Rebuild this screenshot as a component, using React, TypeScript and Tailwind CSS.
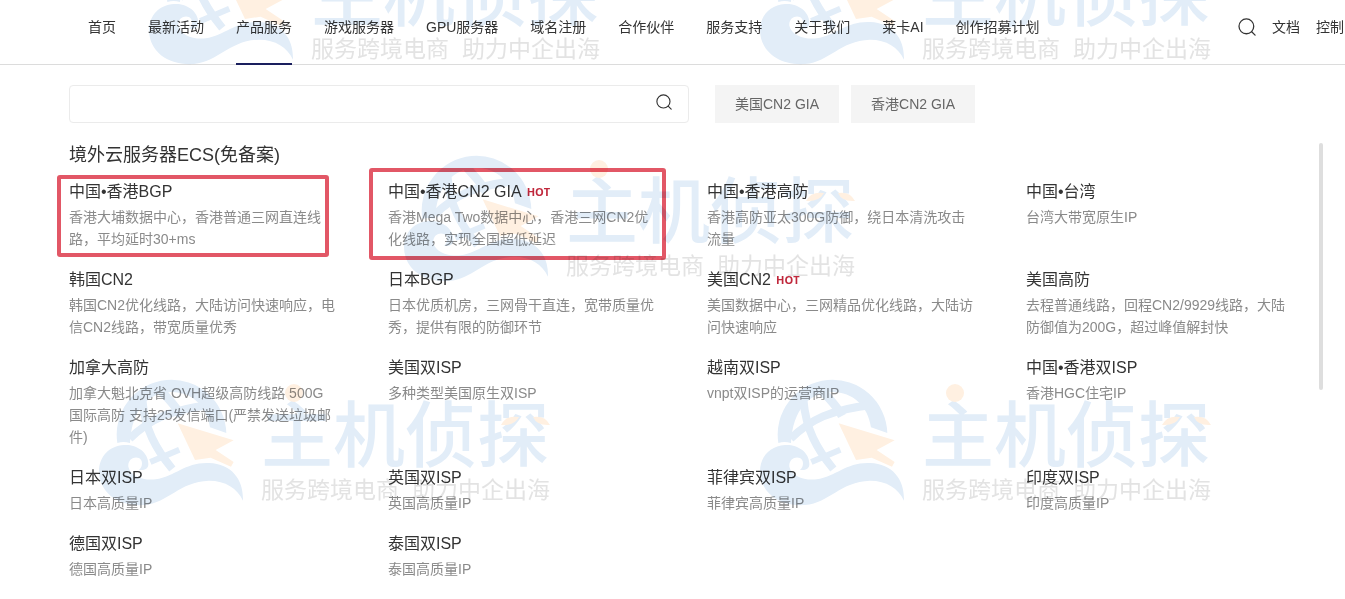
import { useState } from 'react'

const navItems = [
  '首页',
  '最新活动',
  '产品服务',
  '游戏服务器',
  'GPU服务器',
  '域名注册',
  '合作伙伴',
  '服务支持',
  '关于我们',
  '莱卡AI',
  '创作招募计划',
]

const hotSearches = ['美国CN2 GIA', '香港CN2 GIA']

type Product = {
  name: string
  desc: string
  hot?: boolean
  frame?: string
}

const products: Product[] = [
  {
    name: '中国•香港BGP',
    desc: '香港大埔数据中心，香港普通三网直连线路，平均延时30+ms',
    frame: '-left-3 -top-[3px] h-[82px] w-[272px]',
  },
  {
    name: '中国•香港CN2 GIA',
    desc: '香港Mega Two数据中心，香港三网CN2优化线路，实现全国超低延迟',
    hot: true,
    frame: '-left-[19px] -top-[10px] h-[92px] w-[297px]',
  },
  { name: '中国•香港高防', desc: '香港高防亚太300G防御，绕日本清洗攻击流量' },
  { name: '中国•台湾', desc: '台湾大带宽原生IP' },
  { name: '韩国CN2', desc: '韩国CN2优化线路，大陆访问快速响应，电信CN2线路，带宽质量优秀' },
  { name: '日本BGP', desc: '日本优质机房，三网骨干直连，宽带质量优秀，提供有限的防御环节' },
  { name: '美国CN2', desc: '美国数据中心，三网精品优化线路，大陆访问快速响应', hot: true },
  { name: '美国高防', desc: '去程普通线路，回程CN2/9929线路，大陆防御值为200G，超过峰值解封快' },
  {
    name: '加拿大高防',
    desc: '加拿大魁北克省 OVH超级高防线路 500G国际高防 支持25发信端口(严禁发送垃圾邮件)',
  },
  { name: '美国双ISP', desc: '多种类型美国原生双ISP' },
  { name: '越南双ISP', desc: 'vnpt双ISP的运营商IP' },
  { name: '中国•香港双ISP', desc: '香港HGC住宅IP' },
  { name: '日本双ISP', desc: '日本高质量IP' },
  { name: '英国双ISP', desc: '英国高质量IP' },
  { name: '菲律宾双ISP', desc: '菲律宾高质量IP' },
  { name: '印度双ISP', desc: '印度高质量IP' },
  { name: '德国双ISP', desc: '德国高质量IP' },
  { name: '泰国双ISP', desc: '泰国高质量IP' },
]

const watermarks = [
  'left-[149px] -top-[62px]',
  'left-[760px] -top-[62px]',
  'left-[404px] top-[155px]',
  'left-[99px] top-[379px]',
  'left-[760px] top-[379px]',
]

function SearchIcon({ className }: { className: string }) {
  return (
    <svg viewBox="0 0 20 20" fill="none" stroke="currentColor" className={className} aria-hidden="true">
      <circle cx="9.3" cy="9.3" r="8.2" strokeWidth="1.4" />
      <path d="M15.2 15.2 L19 19" strokeWidth="1.4" strokeLinecap="round" />
    </svg>
  )
}

function Watermark({ className }: { className: string }) {
  return (
    <svg
      viewBox="0 0 456 132"
      className={`pointer-events-none absolute z-10 h-[132px] w-[456px] mix-blend-multiply ${className}`}
      aria-hidden="true"
    >
      <g transform="translate(-10 -9) scale(0.3333)">
        {/* globe */}
        <path
          fill="#e2edf8"
          d="M85 219 A164.5 164.5 0 1 1 412 189 L363 172 C354 108 308 66 248 66 C180 66 128 118 123 219 Q103 213 85 219Z"
        />
        <g fill="none" stroke="#e2edf8">
          <path d="M122 206 C180 150 240 118 372 104" strokeWidth="24" />
          <path d="M160 88 C168 180 200 236 250 297" strokeWidth="24" />
          <path d="M214 58 C236 88 256 100 276 138" strokeWidth="26" />
          <path d="M184 276 L271 239" strokeWidth="18" />
        </g>
        {/* wave */}
        <path
          fill="#e2edf8"
          d="M178 285 C180 245 140 222 105 225 C60 228 30 260 30 305 C32 370 90 410 165 405 C240 398 270 335 360 332 C410 332 445 355 462 392 C464 330 430 282 360 279 C290 276 260 318 200 328 C160 332 125 318 118 290 C116 268 135 258 150 264 C162 270 162 290 150 300 C168 302 176 296 178 285Z"
        />
        {/* pointer */}
        <path fill="#fff0e1" d="M266 160 L434 211 L380 240 L434 276 L426 290 L365 263 L318 270Z" />
      </g>
      <text
        x="162"
        y="82"
        fontSize="72"
        fontWeight="500"
        fill="#e2edf8"
        fontFamily="'Noto Sans CJK SC', sans-serif"
      >
        主机侦探
      </text>
      <circle cx="195" cy="14" r="9" fill="#fff0e1" />
      <path d="M402 46 Q407 36 420 38 Q415 47 402 46Z" fill="#fff0e1" />
      <path d="M434 38 Q446 36 451 46 Q438 47 434 38Z" fill="#fff0e1" />
      <text x="162" y="119" fontSize="23" fill="#e3e3e3" fontFamily="'Noto Sans CJK SC', sans-serif">
        服务跨境电商
      </text>
      <text x="313" y="119" fontSize="23" fill="#e3e3e3" fontFamily="'Noto Sans CJK SC', sans-serif">
        助力中企出海
      </text>
    </svg>
  )
}

function ProductItem({ product }: { product: Product }) {
  return (
    <li className="relative pr-[52px]">
      <a href="#" className="block">
        <h3 className="flex items-center gap-[5px] text-base leading-7 text-[#333]">
          {product.name}
          {product.hot && (
            <span className="font-[Open_Sans,sans-serif] text-[11px] font-bold text-[#c0283c]">HOT</span>
          )}
        </h3>
        <p className="text-sm leading-[22px] text-[#8a8a8a]">{product.desc}</p>
      </a>
      {product.frame && (
        <span
          className={`pointer-events-none absolute rounded-[3px] border-4 border-[#e25766] ${product.frame}`}
        />
      )}
    </li>
  )
}

export default function App() {
  const [active, setActive] = useState('产品服务')
  const [keyword, setKeyword] = useState('')

  return (
    <div className="relative min-h-screen overflow-hidden bg-white font-['Liberation_Sans','Noto_Sans_CJK_SC',sans-serif]">
      <header className="flex h-[65px] border-b border-[#dcdcdc] pl-[88px] text-sm text-[#333]">
        <nav className="flex shrink-0 gap-8">
          {navItems.map((item) => (
            <a
              key={item}
              href="#"
              onClick={() => setActive(item)}
              className={`h-[65px] border-b-2 pt-4 leading-[22px] whitespace-nowrap ${
                item === active ? 'border-[#1a1f5e]' : 'border-transparent'
              }`}
            >
              {item}
            </a>
          ))}
        </nav>
        <div className="-mr-[13px] ml-auto flex h-[54px] shrink-0 items-center gap-4">
          <button type="button" aria-label="搜索">
            <SearchIcon className="size-[18px]" />
          </button>
          <a href="#">文档</a>
          <a href="#">控制台</a>
        </div>
      </header>

      <main className="pt-5 pl-[69px]">
        <div className="flex items-center">
          <form
            className="flex h-[38px] w-[620px] items-center rounded-sm border border-[#ebebeb] pr-4"
            onSubmit={(e) => e.preventDefault()}
          >
            <input
              type="text"
              aria-label="搜索产品"
              value={keyword}
              onChange={(e) => setKeyword(e.target.value)}
              className="h-full min-w-0 flex-1 px-4 text-sm outline-none"
            />
            <button type="submit" aria-label="搜索" className="pb-1 text-[#333]">
              <SearchIcon className="size-4" />
            </button>
          </form>
          <div className="ml-[26px] flex gap-3">
            {hotSearches.map((text) => (
              <button key={text} type="button" className="h-[38px] bg-[#f4f4f4] px-5 text-sm text-[#666]">
                {text}
              </button>
            ))}
          </div>
        </div>

        <h2 className="mt-4 text-lg leading-8 text-[#333]">境外云服务器ECS(免备案)</h2>
        <ul className="mt-[7px] grid grid-cols-4 gap-y-4">
          {products.map((product) => (
            <ProductItem key={product.name} product={product} />
          ))}
        </ul>
      </main>

      {/* scroll thumb */}
      <div className="absolute top-[143px] right-[22px] h-[247px] w-1 rounded-full bg-[#dedede]" />

      {watermarks.map((position) => (
        <Watermark key={position} className={position} />
      ))}
    </div>
  )
}
